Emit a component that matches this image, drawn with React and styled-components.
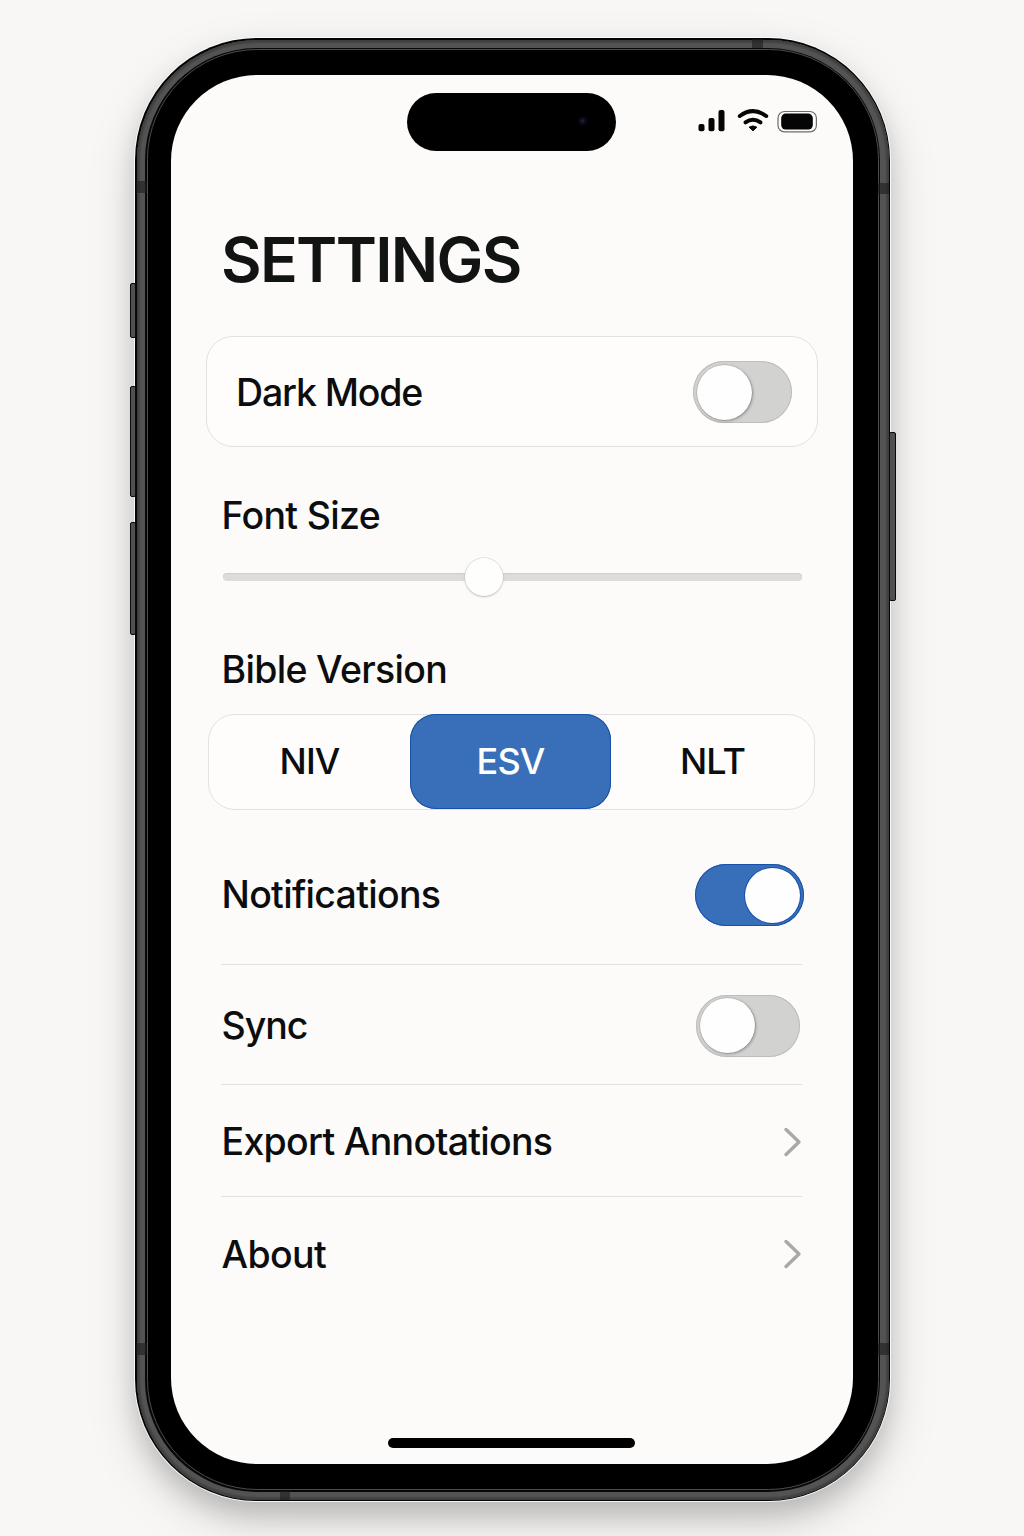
import React, { useState } from "react";
import styled, { createGlobalStyle } from "styled-components";

const GlobalStyle = createGlobalStyle`
  * { box-sizing: border-box; }
  html, body { margin: 0; padding: 0; background: #f8f7f5; }
  button { font: inherit; border: 0; margin: 0; padding: 0; background: none; color: inherit; }
`;

const Stage = styled.main`
  width: 1024px;
  height: 1536px;
  overflow: hidden;
  display: flex;
  justify-content: center;
  padding: 38px 0 0 1px;
  background: #f8f7f5;
  color: #0c0d0e;
  font-family: Inter, "Liberation Sans", sans-serif;
`;

const Frame = styled.div`
  position: relative;
  width: 755px;
  height: 1463px;
  padding: 1.5px;
  border-radius: 122px;
  background: #050505;
  box-shadow: 0 0 0 1px rgba(255, 255, 255, 0.85),
    0 14px 24px rgba(0, 0, 0, 0.15), 0 20px 50px rgba(0, 0, 0, 0.15);
`;

const Metal = styled.div`
  height: 100%;
  padding: 8px 8.5px;
  border-radius: 120.5px;
  background: #535353;
  box-shadow: inset 0 0 3px 1px #383838, inset 0 0 0 3px #494949;
`;

const Seam = styled.div`
  height: 100%;
  padding: 1.5px;
  border-radius: 112px;
  background: #080808;
`;

const Bezel = styled.div`
  height: 100%;
  padding: 25px 24.5px 25px 23.5px;
  border: 1px solid #4b4b4b;
  border-radius: 110.5px;
  background: #000;
`;

const Screen = styled.div`
  height: 100%;
  border-radius: 86px;
  padding: 18px 35.5px 0 34.5px;
  background: #fcfbf9;
  display: flex;
  flex-direction: column;
`;

const SideButton = styled.span`
  position: absolute;
  top: ${(p) => p.$top}px;
  ${(p) => p.$side}: ${(p) => (p.$side === "left" ? -5 : -6)}px;
  width: ${(p) => (p.$side === "left" ? 6 : 7)}px;
  height: ${(p) => p.$height}px;
  border: 1.5px solid #0a0a0a;
  border-radius: 2px;
  background: #505050;
`;

const Antenna = styled.span`
  position: absolute;
  background: rgba(28, 28, 28, 0.6);
  top: ${(p) => p.$top}px;
  left: ${(p) => p.$left}px;
  width: ${(p) => p.$width}px;
  height: ${(p) => p.$height}px;
`;

const StatusBar = styled.header`
  display: grid;
  grid-template-columns: 1fr 209px 1fr;
  height: 58px;
`;

const Island = styled.div`
  grid-column: 2;
  display: flex;
  align-items: center;
  justify-content: flex-end;
  padding: 0 28px 3px 0;
  border-radius: 29px;
  background: #000;
`;

const Lens = styled.span`
  width: 10px;
  height: 10px;
  border-radius: 50%;
  background: radial-gradient(circle at 45% 50%, #25254d 0, #0d0d20 30%, #030306 65%);
`;

const StatusIcons = styled.svg`
  width: 122px;
  height: 30px;
  justify-self: end;
  margin: 12.5px 0 0;
`;

const Title = styled.h1`
  margin: 71.5px 0 0 15.5px;
  height: 72px;
  font-size: 62.5px;
  line-height: 72px;
  font-weight: 600;
  letter-spacing: -1.7px;
  color: #121313;
`;

const Card = styled.section`
  display: flex;
  align-items: center;
  justify-content: space-between;
  height: 111px;
  margin-top: 41.5px;
  padding: 1px 25px 0 29.5px;
  border: 1px solid #e3e2e1;
  border-radius: 27px;
  background: #fefdfc;
`;

const Label = styled.span`
  font-size: 37.5px;
  line-height: 46px;
  font-weight: 500;
  white-space: nowrap;
  padding-top: ${(p) => p.$drop || 0}px;
  letter-spacing: ${(p) => p.$track ?? -0.7}px;
`;

const Field = styled.section`
  display: flex;
  flex-direction: column;
  margin-top: ${(p) => p.$gap}px;
  padding-left: 16px;
`;

const SliderTrack = styled.div`
  display: flex;
  align-items: center;
  width: 579px;
  height: 8px;
  margin: 34px 0 0 1px;
  padding-left: 242.5px;
  border-radius: 4px;
  background: #dddcda;
  box-shadow: inset 0 1px 1px #cfcecd;
`;

const SliderThumb = styled.span`
  flex: none;
  width: 38px;
  height: 38px;
  border-radius: 50%;
  background: #fefefd;
  box-shadow: 0 0 0 0.5px #d0cfcd, 0 1px 2px rgba(0, 0, 0, 0.26);
`;

const Segments = styled.div`
  display: grid;
  grid-template-columns: 201px 201px 1fr;
  width: 607px;
  height: 96px;
  margin: 21px 0 0 2.5px;
  border: 1px solid #e3e2e1;
  border-radius: 27px;
  background: #fefdfc;
`;

const Segment = styled.button`
  height: 94.5px;
  margin-top: -1px;
  border-radius: 26px;
  font-size: 36px;
  font-weight: 500;
  letter-spacing: -0.9px;
  color: ${(p) => (p.$on ? "#fff" : "#0c0d0e")};
  background: ${(p) => (p.$on ? "#396fb9" : "transparent")};
  box-shadow: ${(p) => (p.$on ? "inset 0 0 0 1px #1751aa" : "none")};
`;

const List = styled.div`
  width: 581px;
  margin: 16px 0 0 15px;
`;

const Row = styled.div`
  display: flex;
  align-items: center;
  justify-content: space-between;
  height: ${(p) => p.$height}px;
  padding: ${(p) => p.$drop || 0}px 0 0 1px;
  border-bottom: ${(p) => (p.$last ? "0" : "1px solid #e3e2e1")};
`;

const Toggle = styled.button`
  display: flex;
  align-items: center;
  justify-content: ${(p) => (p.$on ? "flex-end" : "flex-start")};
  flex: none;
  width: ${(p) => p.$width}px;
  height: 62px;
  padding: 0 4px;
  margin-right: ${(p) => p.$shift || 0}px;
  border-radius: 31px;
  background: ${(p) => (p.$on ? "#396fb9" : "#d2d2d1")};
  box-shadow: inset 0 0 0 1px ${(p) => (p.$on ? "#1751aa" : "#bdbdbc")};
`;

const Knob = styled.span`
  width: 55px;
  height: 55px;
  border-radius: 50%;
  background: #fefefe;
  box-shadow: ${(p) =>
    p.$on
      ? "0 0 0 1px #1751aa"
      : "0 0 0 0.5px rgba(0,0,0,.18), 1px 1px 3px rgba(0,0,0,.3)"};
`;

const Chevron = styled.svg`
  width: 20px;
  height: 32px;
`;

const HomeBar = styled.div`
  width: 247px;
  height: 10px;
  margin: auto auto 16px;
  border-radius: 5px;
  background: #000;
`;

function Switch({ on: initial, width, shift, label }) {
  const [on, setOn] = useState(Boolean(initial));
  return (
    <Toggle
      $on={on}
      $width={width}
      $shift={shift}
      role="switch"
      aria-checked={on}
      aria-label={label}
      onClick={() => setOn(!on)}
    >
      <Knob $on={on} />
    </Toggle>
  );
}

function ChevronRight() {
  return (
    <Chevron viewBox="0 0 20 32">
      <path
        d="M4 3.5 L17 16 L4 28.5"
        fill="none"
        stroke="#a9a8a7"
        strokeWidth="3.4"
        strokeLinecap="round"
        strokeLinejoin="round"
      />
    </Chevron>
  );
}

function Indicators() {
  return (
    <StatusIcons viewBox="695.5 106 122 30">
      <g fill="#050505">
        <rect x="698" y="124" width="6" height="7.3" rx="2" />
        <rect x="708" y="118" width="6" height="13.3" rx="2" />
        <rect x="718" y="110" width="6" height="21.3" rx="2" />
        <path d="M748.6 127.2 Q752.5 124.6 756.4 127.2 L752.5 130.8 Z" stroke="#050505" strokeLinejoin="round" />
        <rect x="780.7" y="113.6" width="31.6" height="16" rx="4.5" />
      </g>
      <g fill="none" stroke="#050505" strokeWidth="4" strokeLinecap="round">
        <path d="M739.3 116 Q752.5 106.2 765.7 116" />
        <path d="M745 122.4 Q752.5 117 760 122.4" />
      </g>
      <rect x="777.5" y="111.5" width="38.4" height="20.4" rx="6.5" fill="none" stroke="#6d6d6c" strokeWidth="1.2" />
    </StatusIcons>
  );
}

const VERSIONS = ["NIV", "ESV", "NLT"];

export default function App() {
  const [version, setVersion] = useState("ESV");
  return (
    <>
      <GlobalStyle />
      <Stage>
        <Frame>
          <SideButton $side="left" $top={245} $height={55} />
          <SideButton $side="left" $top={348} $height={111} />
          <SideButton $side="left" $top={484} $height={113} />
          <SideButton $side="right" $top={394} $height={169} />
          <Metal>
            <Seam>
              <Bezel>
                <Screen>
                  <StatusBar>
                    <Island>
                      <Lens />
                    </Island>
                    <Indicators />
                  </StatusBar>
                  <Title>SETTINGS</Title>
                  <Card>
                    <Label $track={-1.15} $drop={2}>Dark Mode</Label>
                    <Switch width={99} label="Dark Mode" />
                  </Card>
                  <Field $gap={46}>
                    <Label>Font Size</Label>
                    <SliderTrack>
                      <SliderThumb />
                    </SliderTrack>
                  </Field>
                  <Field $gap={66}>
                    <Label>Bible Version</Label>
                  </Field>
                  <Segments>
                    {VERSIONS.map((v) => (
                      <Segment key={v} $on={v === version} onClick={() => setVersion(v)}>
                        {v}
                      </Segment>
                    ))}
                  </Segments>
                  <List>
                    <Row $height={139}>
                      <Label>Notifications</Label>
                      <Switch on width={108.5} shift={-2} label="Notifications" />
                    </Row>
                    <Row $height={120} $drop={2}>
                      <Label $track={-1}>Sync</Label>
                      <Switch width={104} shift={1.5} label="Sync" />
                    </Row>
                    <Row $height={112} $drop={2}>
                      <Label $drop={1}>Export Annotations</Label>
                      <ChevronRight />
                    </Row>
                    <Row $height={114} $last>
                      <Label $track={-0.6} $drop={2}>About</Label>
                      <ChevronRight />
                    </Row>
                  </List>
                  <HomeBar />
                </Screen>
              </Bezel>
            </Seam>
          </Metal>
          <Antenna $top={143} $left={1} $width={11} $height={12} />
          <Antenna $top={145} $left={743} $width={11} $height={11} />
          <Antenna $top={1305} $left={1} $width={11} $height={12} />
          <Antenna $top={1305} $left={743} $width={11} $height={12} />
          <Antenna $top={1} $left={617} $width={11} $height={9} />
          <Antenna $top={1453} $left={145} $width={10} $height={9} />
        </Frame>
      </Stage>
    </>
  );
}
